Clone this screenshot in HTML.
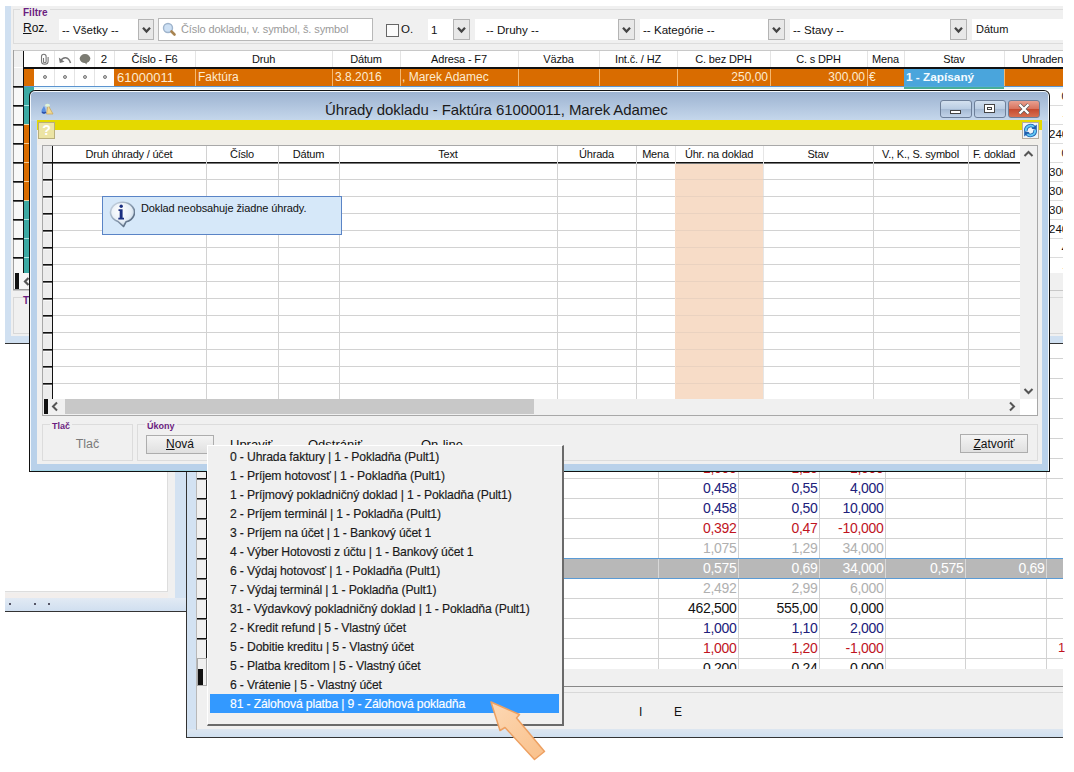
<!DOCTYPE html>
<html><head><meta charset="utf-8"><style>
html,body{margin:0;padding:0;}
body{width:1074px;height:772px;position:relative;overflow:hidden;background:#fff;font-family:"Liberation Sans",sans-serif;}
div{position:absolute;}
.t{white-space:nowrap;line-height:1.15;}
svg{display:block;}
</style></head><body>
<div style="left:186px;top:300px;width:877px;height:438px;background:#f0f0f0"></div>
<div style="left:186px;top:300px;width:1px;height:438px;background:#333"></div>
<div style="left:186px;top:737px;width:877px;height:1px;background:#333"></div>
<div style="left:187px;top:300px;width:10px;height:437px;background:#d3e2f2"></div>
<div style="left:187px;top:729px;width:876px;height:8px;background:linear-gradient(#dde6f0,#d0e0f0)"></div>
<div style="left:197px;top:300px;width:866px;height:369px;background:#fff"></div>
<div style="left:197px;top:300px;width:10px;height:369px;background:#f0f0f0"></div>
<div style="left:206px;top:300px;width:1px;height:386px;background:#111"></div>
<div style="left:196px;top:300px;width:1px;height:430px;background:#b8b8b8"></div>
<div style="left:197px;top:358px;width:10px;height:1px;background:#111"></div>
<div style="left:197px;top:359px;width:10px;height:1px;background:#777"></div>
<div style="left:207px;top:358px;width:856px;height:1px;background:#d2d2d2"></div>
<div style="left:197px;top:378px;width:10px;height:1px;background:#111"></div>
<div style="left:197px;top:379px;width:10px;height:1px;background:#777"></div>
<div style="left:207px;top:378px;width:856px;height:1px;background:#d2d2d2"></div>
<div style="left:197px;top:398px;width:10px;height:1px;background:#111"></div>
<div style="left:197px;top:399px;width:10px;height:1px;background:#777"></div>
<div style="left:207px;top:398px;width:856px;height:1px;background:#d2d2d2"></div>
<div style="left:197px;top:418px;width:10px;height:1px;background:#111"></div>
<div style="left:197px;top:419px;width:10px;height:1px;background:#777"></div>
<div style="left:207px;top:418px;width:856px;height:1px;background:#d2d2d2"></div>
<div style="left:197px;top:438px;width:10px;height:1px;background:#111"></div>
<div style="left:197px;top:439px;width:10px;height:1px;background:#777"></div>
<div style="left:207px;top:438px;width:856px;height:1px;background:#d2d2d2"></div>
<div style="left:197px;top:458px;width:10px;height:1px;background:#111"></div>
<div style="left:197px;top:459px;width:10px;height:1px;background:#777"></div>
<div style="left:207px;top:458px;width:856px;height:1px;background:#d2d2d2"></div>
<div style="left:197px;top:478px;width:10px;height:1px;background:#111"></div>
<div style="left:197px;top:479px;width:10px;height:1px;background:#777"></div>
<div style="left:207px;top:478px;width:856px;height:1px;background:#d2d2d2"></div>
<div style="left:197px;top:498px;width:10px;height:1px;background:#111"></div>
<div style="left:197px;top:499px;width:10px;height:1px;background:#777"></div>
<div style="left:207px;top:498px;width:856px;height:1px;background:#d2d2d2"></div>
<div style="left:197px;top:518px;width:10px;height:1px;background:#111"></div>
<div style="left:197px;top:519px;width:10px;height:1px;background:#777"></div>
<div style="left:207px;top:518px;width:856px;height:1px;background:#d2d2d2"></div>
<div style="left:197px;top:538px;width:10px;height:1px;background:#111"></div>
<div style="left:197px;top:539px;width:10px;height:1px;background:#777"></div>
<div style="left:207px;top:538px;width:856px;height:1px;background:#d2d2d2"></div>
<div style="left:197px;top:558px;width:10px;height:1px;background:#111"></div>
<div style="left:197px;top:559px;width:10px;height:1px;background:#777"></div>
<div style="left:207px;top:558px;width:856px;height:1px;background:#d2d2d2"></div>
<div style="left:197px;top:578px;width:10px;height:1px;background:#111"></div>
<div style="left:197px;top:579px;width:10px;height:1px;background:#777"></div>
<div style="left:207px;top:578px;width:856px;height:1px;background:#d2d2d2"></div>
<div style="left:197px;top:598px;width:10px;height:1px;background:#111"></div>
<div style="left:197px;top:599px;width:10px;height:1px;background:#777"></div>
<div style="left:207px;top:598px;width:856px;height:1px;background:#d2d2d2"></div>
<div style="left:197px;top:618px;width:10px;height:1px;background:#111"></div>
<div style="left:197px;top:619px;width:10px;height:1px;background:#777"></div>
<div style="left:207px;top:618px;width:856px;height:1px;background:#d2d2d2"></div>
<div style="left:197px;top:638px;width:10px;height:1px;background:#111"></div>
<div style="left:197px;top:639px;width:10px;height:1px;background:#777"></div>
<div style="left:207px;top:638px;width:856px;height:1px;background:#d2d2d2"></div>
<div style="left:197px;top:658px;width:10px;height:1px;background:#111"></div>
<div style="left:197px;top:659px;width:10px;height:1px;background:#777"></div>
<div style="left:207px;top:658px;width:856px;height:1px;background:#d2d2d2"></div>
<div style="left:197px;top:678px;width:10px;height:1px;background:#111"></div>
<div style="left:197px;top:679px;width:10px;height:1px;background:#777"></div>
<div style="left:658px;top:300px;width:1px;height:369px;background:#d2d2d2"></div>
<div style="left:738px;top:300px;width:1px;height:369px;background:#d2d2d2"></div>
<div style="left:819px;top:300px;width:1px;height:369px;background:#d2d2d2"></div>
<div style="left:885px;top:300px;width:1px;height:369px;background:#d2d2d2"></div>
<div style="left:965px;top:300px;width:1px;height:369px;background:#d2d2d2"></div>
<div style="left:1046px;top:300px;width:1px;height:369px;background:#d2d2d2"></div>
<div style="left:207px;top:559px;width:856px;height:20px;background:#b8b8b8"></div>
<div style="left:207px;top:558px;width:856px;height:1px;background:#5b9bd5"></div>
<div style="left:207px;top:578px;width:856px;height:1px;background:#5b9bd5"></div>
<div style="left:658px;top:559px;width:1px;height:19px;background:#d8d8d8"></div>
<div style="left:738px;top:559px;width:1px;height:19px;background:#d8d8d8"></div>
<div style="left:819px;top:559px;width:1px;height:19px;background:#d8d8d8"></div>
<div style="left:885px;top:559px;width:1px;height:19px;background:#d8d8d8"></div>
<div style="left:965px;top:559px;width:1px;height:19px;background:#d8d8d8"></div>
<div style="left:1046px;top:559px;width:1px;height:19px;background:#d8d8d8"></div>
<div class="t" style="left:658px;top:460px;width:78.5px;text-align:right;color:#c0141e;font-size:14px;letter-spacing:-0.3px">1,000</div>
<div class="t" style="left:738px;top:460px;width:79.5px;text-align:right;color:#c0141e;font-size:14px;letter-spacing:-0.3px">1,20</div>
<div class="t" style="left:819px;top:460px;width:64.5px;text-align:right;color:#c0141e;font-size:14px;letter-spacing:-0.3px">-1,000</div>
<div class="t" style="left:658px;top:480px;width:78.5px;text-align:right;color:#20207a;font-size:14px;letter-spacing:-0.3px">0,458</div>
<div class="t" style="left:738px;top:480px;width:79.5px;text-align:right;color:#20207a;font-size:14px;letter-spacing:-0.3px">0,55</div>
<div class="t" style="left:819px;top:480px;width:64.5px;text-align:right;color:#20207a;font-size:14px;letter-spacing:-0.3px">4,000</div>
<div class="t" style="left:658px;top:500px;width:78.5px;text-align:right;color:#20207a;font-size:14px;letter-spacing:-0.3px">0,458</div>
<div class="t" style="left:738px;top:500px;width:79.5px;text-align:right;color:#20207a;font-size:14px;letter-spacing:-0.3px">0,50</div>
<div class="t" style="left:819px;top:500px;width:64.5px;text-align:right;color:#20207a;font-size:14px;letter-spacing:-0.3px">10,000</div>
<div class="t" style="left:658px;top:520px;width:78.5px;text-align:right;color:#c0141e;font-size:14px;letter-spacing:-0.3px">0,392</div>
<div class="t" style="left:738px;top:520px;width:79.5px;text-align:right;color:#c0141e;font-size:14px;letter-spacing:-0.3px">0,47</div>
<div class="t" style="left:819px;top:520px;width:64.5px;text-align:right;color:#c0141e;font-size:14px;letter-spacing:-0.3px">-10,000</div>
<div class="t" style="left:658px;top:540px;width:78.5px;text-align:right;color:#b0b0b0;font-size:14px;letter-spacing:-0.3px">1,075</div>
<div class="t" style="left:738px;top:540px;width:79.5px;text-align:right;color:#b0b0b0;font-size:14px;letter-spacing:-0.3px">1,29</div>
<div class="t" style="left:819px;top:540px;width:64.5px;text-align:right;color:#b0b0b0;font-size:14px;letter-spacing:-0.3px">34,000</div>
<div class="t" style="left:658px;top:560px;width:78.5px;text-align:right;color:#fff;font-size:14px;letter-spacing:-0.3px">0,575</div>
<div class="t" style="left:738px;top:560px;width:79.5px;text-align:right;color:#fff;font-size:14px;letter-spacing:-0.3px">0,69</div>
<div class="t" style="left:819px;top:560px;width:64.5px;text-align:right;color:#fff;font-size:14px;letter-spacing:-0.3px">34,000</div>
<div class="t" style="left:885px;top:560px;width:78.5px;text-align:right;color:#fff;font-size:14px;letter-spacing:-0.3px">0,575</div>
<div class="t" style="left:965px;top:560px;width:79.5px;text-align:right;color:#fff;font-size:14px;letter-spacing:-0.3px">0,69</div>
<div class="t" style="left:658px;top:580px;width:78.5px;text-align:right;color:#b0b0b0;font-size:14px;letter-spacing:-0.3px">2,492</div>
<div class="t" style="left:738px;top:580px;width:79.5px;text-align:right;color:#b0b0b0;font-size:14px;letter-spacing:-0.3px">2,99</div>
<div class="t" style="left:819px;top:580px;width:64.5px;text-align:right;color:#b0b0b0;font-size:14px;letter-spacing:-0.3px">6,000</div>
<div class="t" style="left:658px;top:600px;width:78.5px;text-align:right;color:#111;font-size:14px;letter-spacing:-0.3px">462,500</div>
<div class="t" style="left:738px;top:600px;width:79.5px;text-align:right;color:#111;font-size:14px;letter-spacing:-0.3px">555,00</div>
<div class="t" style="left:819px;top:600px;width:64.5px;text-align:right;color:#111;font-size:14px;letter-spacing:-0.3px">0,000</div>
<div class="t" style="left:658px;top:620px;width:78.5px;text-align:right;color:#20207a;font-size:14px;letter-spacing:-0.3px">1,000</div>
<div class="t" style="left:738px;top:620px;width:79.5px;text-align:right;color:#20207a;font-size:14px;letter-spacing:-0.3px">1,10</div>
<div class="t" style="left:819px;top:620px;width:64.5px;text-align:right;color:#20207a;font-size:14px;letter-spacing:-0.3px">2,000</div>
<div class="t" style="left:658px;top:640px;width:78.5px;text-align:right;color:#c0141e;font-size:14px;letter-spacing:-0.3px">1,000</div>
<div class="t" style="left:738px;top:640px;width:79.5px;text-align:right;color:#c0141e;font-size:14px;letter-spacing:-0.3px">1,20</div>
<div class="t" style="left:819px;top:640px;width:64.5px;text-align:right;color:#c0141e;font-size:14px;letter-spacing:-0.3px">-1,000</div>
<div class="t" style="left:658px;top:660px;width:78.5px;text-align:right;color:#111;font-size:14px;letter-spacing:-0.3px">0,200</div>
<div class="t" style="left:738px;top:660px;width:79.5px;text-align:right;color:#111;font-size:14px;letter-spacing:-0.3px">0,24</div>
<div class="t" style="left:819px;top:660px;width:64.5px;text-align:right;color:#111;font-size:14px;letter-spacing:-0.3px">0,000</div>
<div class="t" style="left:1058px;top:641px;color:#c0141e;font-size:13px;">1</div>
<div style="left:197px;top:669px;width:866px;height:60px;background:#f0f0f0"></div>
<div style="left:197px;top:658px;width:10px;height:28px;background:#f0f0f0;border:1px solid #aaa;box-sizing:border-box"></div>
<div style="left:198px;top:669px;width:5px;height:16px;background:#111"></div>
<div style="left:207px;top:686px;width:856px;height:1px;background:#888"></div>
<div style="left:207px;top:692px;width:856px;height:1px;background:#d8d8d8"></div>
<div class="t" style="left:639px;top:706px;font-size:12px;color:#111">I</div>
<div class="t" style="left:674px;top:706px;font-size:12px;color:#111">E</div>
<div style="left:5px;top:300px;width:181px;height:311px;background:#fff"></div>
<div style="left:167px;top:300px;width:8px;height:298px;background:#f0f0f0"></div>
<div style="left:167px;top:300px;width:1px;height:291px;background:#ddd"></div>
<div style="left:5px;top:591px;width:170px;height:7px;background:#f0f0f0"></div>
<div style="left:5px;top:591px;width:163px;height:1px;background:#ddd"></div>
<div style="left:175px;top:300px;width:11px;height:310px;background:#d3e2f2"></div>
<div style="left:5px;top:598px;width:181px;height:13px;background:linear-gradient(#e2eaf4,#d0dff0)"></div>
<div style="left:5px;top:611px;width:182px;height:1px;background:#333"></div>
<div style="left:5px;top:593px;width:163px;height:5px;background:#f2eeec"></div>
<div style="left:9px;top:603px;width:2px;height:2px;background:#556"></div>
<div style="left:34px;top:603px;width:2px;height:2px;background:#556"></div>
<div style="left:48px;top:603px;width:2px;height:2px;background:#556"></div>
<div style="left:186px;top:300px;width:1px;height:311px;background:#333"></div>
<div style="left:5px;top:6px;width:1058px;height:338px;background:#f0f0f0"></div>
<div style="left:5px;top:6px;width:6px;height:337px;background:#d0e0f1"></div>
<div style="left:5px;top:336px;width:1058px;height:7px;background:#d0e0f1"></div>
<div style="left:5px;top:343px;width:1058px;height:1px;background:#333"></div>
<div style="left:13px;top:9px;width:1050px;height:35px;border:1px solid #dcdcdc;border-right:none;box-sizing:border-box"></div>
<div class="t" style="left:20px;top:7px;font-size:10px;font-weight:bold;color:#6b1d80;background:#f0f0f0;padding:0 3px">Filtre</div>
<div class="t" style="left:23px;top:22px;font-size:12px;color:#111"><u>R</u>oz.</div>
<div style="left:59px;top:19px;width:79px;height:21px;background:#fff"></div>
<div style="left:138px;top:19px;width:16px;height:21px;background:#e8e8e8;border:1px solid #b4b4b4;box-sizing:border-box"></div>
<svg style="position:absolute;left:142px;top:26px" width="9" height="8" viewBox="0 0 9 8"><path d="M1 1.8 L4.5 5.5 L8 1.8" stroke="#444" stroke-width="2.3" fill="none"/></svg>
<div class="t" style="left:62px;top:23px;font-size:11.6px;color:#111">-- Všetky --</div>
<div style="left:158px;top:18px;width:215px;height:23px;background:#fff;border:1px solid #b8b8b8;box-sizing:border-box"></div>
<svg style="position:absolute;left:162px;top:22px" width="15" height="15" viewBox="0 0 15 15"><circle cx="6" cy="6" r="4.5" fill="#cde0f4" stroke="#9fb4cc" stroke-width="1.4"/><path d="M9.5 9.5 L12.5 12.5" stroke="#a88450" stroke-width="2.6" stroke-linecap="round"/></svg>
<div class="t" style="left:181px;top:23px;font-size:11px;color:#9a9a9a;letter-spacing:-0.1px">Číslo dokladu, v. symbol, š. symbol</div>
<div style="left:386px;top:24px;width:13px;height:13px;background:#fbfbfb;border:1px solid #666;box-sizing:border-box"></div>
<div class="t" style="left:401px;top:23px;font-size:11.5px;color:#111">O.</div>
<div style="left:428px;top:19px;width:25px;height:21px;background:#fff"></div>
<div style="left:453px;top:19px;width:17px;height:21px;background:#e8e8e8;border:1px solid #b4b4b4;box-sizing:border-box"></div>
<svg style="position:absolute;left:457px;top:26px" width="9" height="8" viewBox="0 0 9 8"><path d="M1 1.8 L4.5 5.5 L8 1.8" stroke="#444" stroke-width="2.3" fill="none"/></svg>
<div class="t" style="left:431px;top:23px;font-size:11.6px;color:#111">1</div>
<div style="left:475px;top:19px;width:143px;height:21px;background:#fff"></div>
<div style="left:618px;top:19px;width:17px;height:21px;background:#e8e8e8;border:1px solid #b4b4b4;box-sizing:border-box"></div>
<svg style="position:absolute;left:622px;top:26px" width="9" height="8" viewBox="0 0 9 8"><path d="M1 1.8 L4.5 5.5 L8 1.8" stroke="#444" stroke-width="2.3" fill="none"/></svg>
<div class="t" style="left:486px;top:23px;font-size:11.6px;color:#111">-- Druhy --</div>
<div style="left:640px;top:19px;width:128px;height:21px;background:#fff"></div>
<div style="left:768px;top:19px;width:17px;height:21px;background:#e8e8e8;border:1px solid #b4b4b4;box-sizing:border-box"></div>
<svg style="position:absolute;left:772px;top:26px" width="9" height="8" viewBox="0 0 9 8"><path d="M1 1.8 L4.5 5.5 L8 1.8" stroke="#444" stroke-width="2.3" fill="none"/></svg>
<div class="t" style="left:643px;top:23px;font-size:11.6px;color:#111">-- Kategórie --</div>
<div style="left:790px;top:19px;width:160px;height:21px;background:#fff"></div>
<div style="left:950px;top:19px;width:17px;height:21px;background:#e8e8e8;border:1px solid #b4b4b4;box-sizing:border-box"></div>
<svg style="position:absolute;left:954px;top:26px" width="9" height="8" viewBox="0 0 9 8"><path d="M1 1.8 L4.5 5.5 L8 1.8" stroke="#444" stroke-width="2.3" fill="none"/></svg>
<div class="t" style="left:793px;top:23px;font-size:11.6px;color:#111">-- Stavy --</div>
<div style="left:972px;top:19px;width:91px;height:21px;background:#fff"></div>
<div class="t" style="left:976px;top:23px;font-size:11px;color:#111">Dátum</div>
<div style="left:13px;top:50px;width:1050px;height:223px;background:#fff"></div>
<div style="left:13px;top:50px;width:1050px;height:1px;background:#c8c8c8"></div>
<div style="left:13px;top:50px;width:1px;height:240px;background:#a0a0a0"></div>
<div style="left:14px;top:51px;width:9px;height:16px;background:#f0f0f0"></div>
<div style="left:23px;top:51px;width:1px;height:222px;background:#111"></div>
<div style="left:24px;top:67px;width:1039px;height:2px;background:#111"></div>
<div style="left:54px;top:51px;width:1px;height:16px;background:#e4e4e4"></div>
<div style="left:74px;top:51px;width:1px;height:16px;background:#e4e4e4"></div>
<div style="left:94px;top:51px;width:1px;height:16px;background:#e4e4e4"></div>
<div style="left:114px;top:51px;width:1px;height:16px;background:#e4e4e4"></div>
<div style="left:195px;top:51px;width:1px;height:16px;background:#e4e4e4"></div>
<div style="left:332px;top:51px;width:1px;height:16px;background:#e4e4e4"></div>
<div style="left:400px;top:51px;width:1px;height:16px;background:#e4e4e4"></div>
<div style="left:518px;top:51px;width:1px;height:16px;background:#e4e4e4"></div>
<div style="left:599px;top:51px;width:1px;height:16px;background:#e4e4e4"></div>
<div style="left:677px;top:51px;width:1px;height:16px;background:#e4e4e4"></div>
<div style="left:770px;top:51px;width:1px;height:16px;background:#e4e4e4"></div>
<div style="left:867px;top:51px;width:1px;height:16px;background:#e4e4e4"></div>
<div style="left:904px;top:51px;width:1px;height:16px;background:#e4e4e4"></div>
<div style="left:1004px;top:51px;width:1px;height:16px;background:#e4e4e4"></div>
<div class="t" style="left:114px;top:53px;width:81px;text-align:center;font-size:11px;letter-spacing:-0.15px;color:#111;overflow:hidden">Číslo - F6</div>
<div class="t" style="left:195px;top:53px;width:137px;text-align:center;font-size:11px;letter-spacing:-0.15px;color:#111;overflow:hidden">Druh</div>
<div class="t" style="left:332px;top:53px;width:68px;text-align:center;font-size:11px;letter-spacing:-0.15px;color:#111;overflow:hidden">Dátum</div>
<div class="t" style="left:400px;top:53px;width:118px;text-align:center;font-size:11px;letter-spacing:-0.15px;color:#111;overflow:hidden">Adresa - F7</div>
<div class="t" style="left:518px;top:53px;width:81px;text-align:center;font-size:11px;letter-spacing:-0.15px;color:#111;overflow:hidden">Väzba</div>
<div class="t" style="left:599px;top:53px;width:78px;text-align:center;font-size:11px;letter-spacing:-0.15px;color:#111;overflow:hidden">Int.č. / HZ</div>
<div class="t" style="left:677px;top:53px;width:93px;text-align:center;font-size:11px;letter-spacing:-0.15px;color:#111;overflow:hidden">C. bez DPH</div>
<div class="t" style="left:770px;top:53px;width:97px;text-align:center;font-size:11px;letter-spacing:-0.15px;color:#111;overflow:hidden">C. s DPH</div>
<div class="t" style="left:867px;top:53px;width:37px;text-align:center;font-size:11px;letter-spacing:-0.15px;color:#111;overflow:hidden">Mena</div>
<div class="t" style="left:904px;top:53px;width:100px;text-align:center;font-size:11px;letter-spacing:-0.15px;color:#111;overflow:hidden">Stav</div>
<div class="t" style="left:1004px;top:53px;width:59px;text-align:center;font-size:11px;letter-spacing:-0.15px;color:#111;overflow:hidden;text-align:left;padding-left:18px;box-sizing:border-box">Uhraden</div>
<div class="t" style="left:94px;top:53px;width:20px;text-align:center;font-size:11.5px;color:#111">2</div>
<svg style="position:absolute;left:40px;top:53px" width="11" height="12" viewBox="0 0 11 12"><path d="M3.5 5 V8.5 a1.3 1.3 0 0 0 2.6 0 V3.5 a2.3 2.3 0 0 0 -4.6 0 V8 a3.3 3.3 0 0 0 6.6 0 V4" stroke="#777" stroke-width="1.1" fill="none"/></svg>
<svg style="position:absolute;left:58px;top:55px" width="14" height="9" viewBox="0 0 14 9"><path d="M2.5 6 C5 1.5 10.5 1 12.5 8" stroke="#777" stroke-width="1.5" fill="none"/><path d="M0.8 2.5 L1.8 8 L6.5 6.8 Z" fill="#777"/></svg>
<svg style="position:absolute;left:79px;top:54px" width="12" height="11" viewBox="0 0 12 11"><ellipse cx="6" cy="4.6" rx="5.3" ry="4.5" fill="#7b7b72"/><path d="M5 8 L7.5 10.5 L8 7.5 Z" fill="#7b7b72"/></svg>
<div style="left:14px;top:68px;width:9px;height:18px;background:#f0f0f0"></div>
<div style="left:24px;top:69px;width:10px;height:17px;background:#d96c00"></div>
<div style="left:34px;top:69px;width:80px;height:17px;background:#fff"></div>
<div style="left:54px;top:69px;width:1px;height:17px;background:#e4e4e4"></div>
<div style="left:74px;top:69px;width:1px;height:17px;background:#e4e4e4"></div>
<div style="left:94px;top:69px;width:1px;height:17px;background:#e4e4e4"></div>
<div style="left:43px;top:75px;width:4px;height:4px;background:#c8c8c8;border:1px solid #7a7a7a;border-radius:50%;box-sizing:border-box"></div>
<div style="left:63px;top:75px;width:4px;height:4px;background:#c8c8c8;border:1px solid #7a7a7a;border-radius:50%;box-sizing:border-box"></div>
<div style="left:83px;top:75px;width:4px;height:4px;background:#c8c8c8;border:1px solid #7a7a7a;border-radius:50%;box-sizing:border-box"></div>
<div style="left:103px;top:75px;width:4px;height:4px;background:#c8c8c8;border:1px solid #7a7a7a;border-radius:50%;box-sizing:border-box"></div>
<div style="left:114px;top:69px;width:949px;height:17px;background:#d96c00"></div>
<div style="left:195px;top:69px;width:1px;height:17px;background:#f5b870"></div>
<div style="left:332px;top:69px;width:1px;height:17px;background:#f5b870"></div>
<div style="left:400px;top:69px;width:1px;height:17px;background:#f5b870"></div>
<div style="left:518px;top:69px;width:1px;height:17px;background:#f5b870"></div>
<div style="left:599px;top:69px;width:1px;height:17px;background:#f5b870"></div>
<div style="left:677px;top:69px;width:1px;height:17px;background:#f5b870"></div>
<div style="left:770px;top:69px;width:1px;height:17px;background:#f5b870"></div>
<div style="left:867px;top:69px;width:1px;height:17px;background:#f5b870"></div>
<div style="left:904px;top:69px;width:1px;height:17px;background:#f5b870"></div>
<div style="left:1004px;top:69px;width:1px;height:17px;background:#f5b870"></div>
<div style="left:904px;top:69px;width:100px;height:17px;background:#4aa5dc"></div>
<div class="t" style="left:117px;top:71px;font-size:13px;color:#fdebd0">61000011</div>
<div class="t" style="left:198px;top:71px;font-size:12px;color:#fdebd0">Faktúra</div>
<div class="t" style="left:335px;top:71px;font-size:12px;color:#fdebd0">3.8.2016</div>
<div class="t" style="left:402px;top:71px;font-size:12px;color:#fdebd0">, Marek Adamec</div>
<div class="t" style="left:677px;top:71px;width:91px;text-align:right;font-size:12px;color:#fdebd0">250,00</div>
<div class="t" style="left:770px;top:71px;width:95px;text-align:right;font-size:12px;color:#fdebd0">300,00</div>
<div class="t" style="left:869px;top:71px;font-size:12px;color:#fdebd0">€</div>
<div class="t" style="left:906px;top:71px;font-size:11.8px;font-weight:bold;color:#f4fbff">1 - Zapísaný</div>
<div style="left:24px;top:86px;width:1039px;height:1px;background:#5c94d0"></div>
<div style="left:34px;top:87px;width:1029px;height:2px;background:#e8f6fc"></div>
<div style="left:904px;top:86px;width:100px;height:1px;background:#52aadc"></div>
<div style="left:904px;top:87px;width:100px;height:2px;background:#48ae98"></div>
<div style="left:24px;top:87px;width:10px;height:19px;background:#3ca9a3"></div>
<div style="left:14px;top:87px;width:9px;height:18px;background:#f8f8f8"></div>
<div style="left:13px;top:86px;width:10px;height:1px;background:#111"></div>
<div style="left:13px;top:87px;width:10px;height:1px;background:#555"></div>
<div style="left:24px;top:106px;width:10px;height:19px;background:#3ca9a3"></div>
<div style="left:14px;top:106px;width:9px;height:18px;background:#f8f8f8"></div>
<div style="left:13px;top:105px;width:10px;height:1px;background:#111"></div>
<div style="left:13px;top:106px;width:10px;height:1px;background:#555"></div>
<div style="left:24px;top:125px;width:10px;height:19px;background:#d96c00"></div>
<div style="left:14px;top:125px;width:9px;height:18px;background:#f8f8f8"></div>
<div style="left:13px;top:124px;width:10px;height:1px;background:#111"></div>
<div style="left:13px;top:125px;width:10px;height:1px;background:#555"></div>
<div style="left:24px;top:144px;width:10px;height:19px;background:#d96c00"></div>
<div style="left:14px;top:144px;width:9px;height:18px;background:#f8f8f8"></div>
<div style="left:13px;top:143px;width:10px;height:1px;background:#111"></div>
<div style="left:13px;top:144px;width:10px;height:1px;background:#555"></div>
<div style="left:24px;top:163px;width:10px;height:19px;background:#d96c00"></div>
<div style="left:14px;top:163px;width:9px;height:18px;background:#f8f8f8"></div>
<div style="left:13px;top:162px;width:10px;height:1px;background:#111"></div>
<div style="left:13px;top:163px;width:10px;height:1px;background:#555"></div>
<div style="left:24px;top:182px;width:10px;height:19px;background:#d96c00"></div>
<div style="left:14px;top:182px;width:9px;height:18px;background:#f8f8f8"></div>
<div style="left:13px;top:181px;width:10px;height:1px;background:#111"></div>
<div style="left:13px;top:182px;width:10px;height:1px;background:#555"></div>
<div style="left:24px;top:201px;width:10px;height:19px;background:#3ca9a3"></div>
<div style="left:14px;top:201px;width:9px;height:18px;background:#f8f8f8"></div>
<div style="left:13px;top:200px;width:10px;height:1px;background:#111"></div>
<div style="left:13px;top:201px;width:10px;height:1px;background:#555"></div>
<div style="left:24px;top:220px;width:10px;height:19px;background:#3ca9a3"></div>
<div style="left:14px;top:220px;width:9px;height:18px;background:#f8f8f8"></div>
<div style="left:13px;top:219px;width:10px;height:1px;background:#111"></div>
<div style="left:13px;top:220px;width:10px;height:1px;background:#555"></div>
<div style="left:24px;top:239px;width:10px;height:19px;background:#3ca9a3"></div>
<div style="left:14px;top:239px;width:9px;height:18px;background:#f8f8f8"></div>
<div style="left:13px;top:238px;width:10px;height:1px;background:#111"></div>
<div style="left:13px;top:239px;width:10px;height:1px;background:#555"></div>
<div style="left:24px;top:258px;width:10px;height:16px;background:#3ca9a3"></div>
<div style="left:14px;top:258px;width:9px;height:18px;background:#f8f8f8"></div>
<div style="left:13px;top:257px;width:10px;height:1px;background:#111"></div>
<div style="left:13px;top:258px;width:10px;height:1px;background:#555"></div>
<div style="left:24px;top:105px;width:5px;height:1px;background:#a8e6e2"></div>
<div style="left:24px;top:124px;width:5px;height:1px;background:#f2d8a8"></div>
<div style="left:24px;top:143px;width:5px;height:1px;background:#f6c890"></div>
<div style="left:24px;top:162px;width:5px;height:1px;background:#f6c890"></div>
<div style="left:24px;top:181px;width:5px;height:1px;background:#f6c890"></div>
<div style="left:24px;top:200px;width:5px;height:1px;background:#f2d8a8"></div>
<div style="left:24px;top:219px;width:5px;height:1px;background:#a8e6e2"></div>
<div style="left:24px;top:238px;width:5px;height:1px;background:#a8e6e2"></div>
<div style="left:24px;top:257px;width:5px;height:1px;background:#a8e6e2"></div>
<div style="left:1049px;top:105px;width:14px;height:1px;background:#dcdcdc"></div>
<div style="left:1049px;top:124px;width:14px;height:1px;background:#dcdcdc"></div>
<div style="left:1049px;top:143px;width:14px;height:1px;background:#dcdcdc"></div>
<div style="left:1049px;top:162px;width:14px;height:1px;background:#dcdcdc"></div>
<div style="left:1049px;top:181px;width:14px;height:1px;background:#dcdcdc"></div>
<div style="left:1049px;top:200px;width:14px;height:1px;background:#dcdcdc"></div>
<div style="left:1049px;top:219px;width:14px;height:1px;background:#dcdcdc"></div>
<div style="left:1049px;top:238px;width:14px;height:1px;background:#dcdcdc"></div>
<div style="left:1049px;top:257px;width:14px;height:1px;background:#dcdcdc"></div>
<div style="left:1049px;top:86px;width:14px;height:187px;overflow:hidden">
<div class="t" style="left:12.5px;top:4px;font-size:11.5px;color:#111">0,00</div>
<div class="t" style="left:13.5px;top:23px;font-size:11.5px;color:#111">-</div>
<div class="t" style="left:0px;top:42px;font-size:11.5px;color:#111">240,00</div>
<div class="t" style="left:12.5px;top:61px;font-size:11.5px;color:#111">0,00</div>
<div class="t" style="left:0px;top:80px;font-size:11.5px;color:#111">300,00</div>
<div class="t" style="left:0px;top:99px;font-size:11.5px;color:#111">300,00</div>
<div class="t" style="left:0px;top:118px;font-size:11.5px;color:#111">300,00</div>
<div class="t" style="left:0px;top:137px;font-size:11.5px;color:#111">240,00</div>
<div class="t" style="left:12.5px;top:156px;font-size:11.5px;color:#111">4,00</div>
<div class="t" style="left:13.5px;top:175px;font-size:11.5px;color:#111">-</div>
</div>
<div style="left:13px;top:273px;width:1050px;height:17px;background:#f0f0f0"></div>
<div style="left:13px;top:290px;width:1050px;height:1px;background:#c8c8c8"></div>
<div style="left:15px;top:273px;width:4px;height:16px;background:#111"></div>
<div style="left:13px;top:273px;width:16px;height:17px;background:#f6f6f6;border-left:1px solid #999;border-bottom:1px solid #999;box-sizing:border-box"></div>
<div style="left:15px;top:273px;width:4px;height:16px;background:#111"></div>
<svg style="position:absolute;left:23px;top:277px" width="7" height="9" viewBox="0 0 7 9"><path d="M5.5 1 L2 4.5 L5.5 8" stroke="#555" stroke-width="2.2" fill="none"/></svg>
<div style="left:13px;top:297px;width:1050px;height:37px;border:1px solid #d8d8d8;border-right:none;box-sizing:border-box"></div>
<div class="t" style="left:23px;top:295px;font-size:10px;font-weight:bold;color:#6b1d80">T</div>
<div style="left:29px;top:90px;width:1021px;height:382px;background:#111;border-radius:6px 6px 0 0"></div>
<div style="left:30px;top:91px;width:1019px;height:380px;background:#f4f8fc;border-radius:5px 5px 0 0"></div>
<div style="left:31px;top:92px;width:1017px;height:379px;background:#b9d1ea;border-radius:4px 4px 0 0"></div>
<div style="left:31px;top:92px;width:1017px;height:29px;background:linear-gradient(#9db3d1,#c6d8ec);border-radius:4px 4px 0 0"></div>
<div style="left:37px;top:120px;width:1005px;height:344px;background:#f0f0f0"></div>
<div style="left:31px;top:470px;width:1017px;height:1px;background:#9fd4e4"></div>
<div style="left:37px;top:120px;width:1005px;height:10px;background:#e4d900"></div>
<div style="left:37px;top:130px;width:1005px;height:15px;background:#f1efea"></div>
<div style="left:38px;top:122px;width:17px;height:17px;background:#ece4a4;border:1px solid #b8ae7c;box-sizing:border-box"></div>
<div class="t" style="left:38px;top:122px;width:17px;text-align:center;font-size:14px;font-weight:bold;color:#fff">?</div>
<svg style="position:absolute;left:39px;top:102px" width="16" height="14" viewBox="0 0 16 14"><path d="M9 3 L14 12 L7.5 12 Z" fill="#f2d98e" stroke="#caa860" stroke-width="0.8"/><path d="M5 4 Q2 8 2.5 10 Q4 12.5 6.5 11 Q7.5 8 5 4 Z" fill="#5b8fe0"/><path d="M3 10 Q5 12 7 10" stroke="#2a4fa8" stroke-width="1.4" fill="none"/><ellipse cx="8.5" cy="3.2" rx="2.5" ry="1.5" fill="#e0f4d8"/></svg>
<div class="t" style="left:325px;top:101px;font-size:15px;color:#1a1a1a;letter-spacing:-0.1px">Úhrady dokladu - Faktúra 61000011, Marek Adamec</div>
<div style="left:940px;top:100px;width:32px;height:18px;border:1px solid #6d7f99;border-radius:3px;box-sizing:border-box;background:linear-gradient(#d3e0ef 0%,#b9cce3 50%,#a4b9d3 51%,#c2d3e8 100%)"></div>
<div style="left:950px;top:110px;width:11px;height:4px;background:#fff;border:1px solid #444;box-sizing:border-box"></div>
<div style="left:974px;top:100px;width:32px;height:18px;border:1px solid #6d7f99;border-radius:3px;box-sizing:border-box;background:linear-gradient(#d3e0ef 0%,#b9cce3 50%,#a4b9d3 51%,#c2d3e8 100%)"></div>
<div style="left:984px;top:104px;width:11px;height:9px;background:#fff;border:1px solid #444;box-sizing:border-box"></div><div style="left:987px;top:107px;width:5px;height:3px;background:#fff;border:1px solid #444;box-sizing:border-box"></div>
<div style="left:1008px;top:100px;width:32px;height:18px;border:1px solid #6d7f99;border-radius:3px;box-sizing:border-box;background:linear-gradient(#e8a090 0%,#d8725c 50%,#c4492e 51%,#d87050 100%)"></div>
<svg style="position:absolute;left:1017px;top:103px" width="14" height="12" viewBox="0 0 14 12"><path d="M2.5 1.5 L11.5 10.5 M11.5 1.5 L2.5 10.5" stroke="#555" stroke-width="3.6"/><path d="M2.5 1.5 L11.5 10.5 M11.5 1.5 L2.5 10.5" stroke="#fff" stroke-width="2.4"/></svg>
<div style="left:1022px;top:122px;width:17px;height:17px;background:#eef4f8;border:1px solid #b4aca0;box-sizing:border-box"></div>
<svg style="position:absolute;left:1023px;top:123px" width="15" height="15" viewBox="0 0 15 15"><g fill="none" stroke-linecap="butt"><path d="M3 8 A4.6 4.6 0 0 1 11 4.2" stroke="#1d5fae" stroke-width="3.6"/><path d="M12 7 A4.6 4.6 0 0 1 4 10.8" stroke="#1d5fae" stroke-width="3.6"/><path d="M3 8 A4.6 4.6 0 0 1 11 4.2" stroke="#62c8f4" stroke-width="2"/><path d="M12 7 A4.6 4.6 0 0 1 4 10.8" stroke="#62c8f4" stroke-width="2"/></g><path d="M13.8 1.5 L13.8 7 L8.5 5.8 Z" fill="#1d5fae"/><path d="M1.2 13.5 L1.2 8 L6.5 9.2 Z" fill="#1d5fae"/></svg>
<div style="left:42px;top:145px;width:996px;height:271px;background:#fff;border:1px solid #a8a8a8;box-sizing:border-box"></div>
<div style="left:43px;top:146px;width:9px;height:253px;background:#ececec"></div>
<div style="left:52px;top:146px;width:1px;height:253px;background:#111"></div>
<div style="left:53px;top:162px;width:967px;height:1px;background:#111"></div>
<div style="left:53px;top:163px;width:967px;height:1px;background:#777"></div>
<div style="left:206px;top:146px;width:1px;height:253px;background:#d2d2d2"></div>
<div style="left:278px;top:146px;width:1px;height:253px;background:#d2d2d2"></div>
<div style="left:339px;top:146px;width:1px;height:253px;background:#d2d2d2"></div>
<div style="left:557px;top:146px;width:1px;height:253px;background:#d2d2d2"></div>
<div style="left:636px;top:146px;width:1px;height:253px;background:#d2d2d2"></div>
<div style="left:675px;top:146px;width:1px;height:253px;background:#e6e6e6"></div>
<div style="left:763px;top:146px;width:1px;height:253px;background:#e6e6e6"></div>
<div style="left:873px;top:146px;width:1px;height:253px;background:#d2d2d2"></div>
<div style="left:968px;top:146px;width:1px;height:253px;background:#d2d2d2"></div>
<div style="left:675px;top:164px;width:88px;height:235px;background:#f7dcc7"></div>
<div style="left:43px;top:162px;width:9px;height:1px;background:#111"></div>
<div style="left:43px;top:163px;width:9px;height:1px;background:#666"></div>
<div style="left:44px;top:164px;width:7px;height:1px;background:#fafafa"></div>
<div style="left:43px;top:179px;width:9px;height:1px;background:#111"></div>
<div style="left:43px;top:180px;width:9px;height:1px;background:#666"></div>
<div style="left:44px;top:181px;width:7px;height:1px;background:#fafafa"></div>
<div style="left:53px;top:179px;width:622px;height:1px;background:#d2d2d2"></div>
<div style="left:763px;top:179px;width:257px;height:1px;background:#d2d2d2"></div>
<div style="left:676px;top:179px;width:87px;height:1px;background:#ead2c0"></div>
<div style="left:43px;top:196px;width:9px;height:1px;background:#111"></div>
<div style="left:43px;top:197px;width:9px;height:1px;background:#666"></div>
<div style="left:44px;top:198px;width:7px;height:1px;background:#fafafa"></div>
<div style="left:53px;top:196px;width:622px;height:1px;background:#d2d2d2"></div>
<div style="left:763px;top:196px;width:257px;height:1px;background:#d2d2d2"></div>
<div style="left:676px;top:196px;width:87px;height:1px;background:#ead2c0"></div>
<div style="left:43px;top:213px;width:9px;height:1px;background:#111"></div>
<div style="left:43px;top:214px;width:9px;height:1px;background:#666"></div>
<div style="left:44px;top:215px;width:7px;height:1px;background:#fafafa"></div>
<div style="left:53px;top:213px;width:622px;height:1px;background:#d2d2d2"></div>
<div style="left:763px;top:213px;width:257px;height:1px;background:#d2d2d2"></div>
<div style="left:676px;top:213px;width:87px;height:1px;background:#ead2c0"></div>
<div style="left:43px;top:230px;width:9px;height:1px;background:#111"></div>
<div style="left:43px;top:231px;width:9px;height:1px;background:#666"></div>
<div style="left:44px;top:232px;width:7px;height:1px;background:#fafafa"></div>
<div style="left:53px;top:230px;width:622px;height:1px;background:#d2d2d2"></div>
<div style="left:763px;top:230px;width:257px;height:1px;background:#d2d2d2"></div>
<div style="left:676px;top:230px;width:87px;height:1px;background:#ead2c0"></div>
<div style="left:43px;top:247px;width:9px;height:1px;background:#111"></div>
<div style="left:43px;top:248px;width:9px;height:1px;background:#666"></div>
<div style="left:44px;top:249px;width:7px;height:1px;background:#fafafa"></div>
<div style="left:53px;top:247px;width:622px;height:1px;background:#d2d2d2"></div>
<div style="left:763px;top:247px;width:257px;height:1px;background:#d2d2d2"></div>
<div style="left:676px;top:247px;width:87px;height:1px;background:#ead2c0"></div>
<div style="left:43px;top:264px;width:9px;height:1px;background:#111"></div>
<div style="left:43px;top:265px;width:9px;height:1px;background:#666"></div>
<div style="left:44px;top:266px;width:7px;height:1px;background:#fafafa"></div>
<div style="left:53px;top:264px;width:622px;height:1px;background:#d2d2d2"></div>
<div style="left:763px;top:264px;width:257px;height:1px;background:#d2d2d2"></div>
<div style="left:676px;top:264px;width:87px;height:1px;background:#ead2c0"></div>
<div style="left:43px;top:281px;width:9px;height:1px;background:#111"></div>
<div style="left:43px;top:282px;width:9px;height:1px;background:#666"></div>
<div style="left:44px;top:283px;width:7px;height:1px;background:#fafafa"></div>
<div style="left:53px;top:281px;width:622px;height:1px;background:#d2d2d2"></div>
<div style="left:763px;top:281px;width:257px;height:1px;background:#d2d2d2"></div>
<div style="left:676px;top:281px;width:87px;height:1px;background:#ead2c0"></div>
<div style="left:43px;top:298px;width:9px;height:1px;background:#111"></div>
<div style="left:43px;top:299px;width:9px;height:1px;background:#666"></div>
<div style="left:44px;top:300px;width:7px;height:1px;background:#fafafa"></div>
<div style="left:53px;top:298px;width:622px;height:1px;background:#d2d2d2"></div>
<div style="left:763px;top:298px;width:257px;height:1px;background:#d2d2d2"></div>
<div style="left:676px;top:298px;width:87px;height:1px;background:#ead2c0"></div>
<div style="left:43px;top:315px;width:9px;height:1px;background:#111"></div>
<div style="left:43px;top:316px;width:9px;height:1px;background:#666"></div>
<div style="left:44px;top:317px;width:7px;height:1px;background:#fafafa"></div>
<div style="left:53px;top:315px;width:622px;height:1px;background:#d2d2d2"></div>
<div style="left:763px;top:315px;width:257px;height:1px;background:#d2d2d2"></div>
<div style="left:676px;top:315px;width:87px;height:1px;background:#ead2c0"></div>
<div style="left:43px;top:332px;width:9px;height:1px;background:#111"></div>
<div style="left:43px;top:333px;width:9px;height:1px;background:#666"></div>
<div style="left:44px;top:334px;width:7px;height:1px;background:#fafafa"></div>
<div style="left:53px;top:332px;width:622px;height:1px;background:#d2d2d2"></div>
<div style="left:763px;top:332px;width:257px;height:1px;background:#d2d2d2"></div>
<div style="left:676px;top:332px;width:87px;height:1px;background:#ead2c0"></div>
<div style="left:43px;top:349px;width:9px;height:1px;background:#111"></div>
<div style="left:43px;top:350px;width:9px;height:1px;background:#666"></div>
<div style="left:44px;top:351px;width:7px;height:1px;background:#fafafa"></div>
<div style="left:53px;top:349px;width:622px;height:1px;background:#d2d2d2"></div>
<div style="left:763px;top:349px;width:257px;height:1px;background:#d2d2d2"></div>
<div style="left:676px;top:349px;width:87px;height:1px;background:#ead2c0"></div>
<div style="left:43px;top:366px;width:9px;height:1px;background:#111"></div>
<div style="left:43px;top:367px;width:9px;height:1px;background:#666"></div>
<div style="left:44px;top:368px;width:7px;height:1px;background:#fafafa"></div>
<div style="left:53px;top:366px;width:622px;height:1px;background:#d2d2d2"></div>
<div style="left:763px;top:366px;width:257px;height:1px;background:#d2d2d2"></div>
<div style="left:676px;top:366px;width:87px;height:1px;background:#ead2c0"></div>
<div style="left:43px;top:383px;width:9px;height:1px;background:#111"></div>
<div style="left:43px;top:384px;width:9px;height:1px;background:#666"></div>
<div style="left:44px;top:385px;width:7px;height:1px;background:#fafafa"></div>
<div style="left:53px;top:383px;width:622px;height:1px;background:#d2d2d2"></div>
<div style="left:763px;top:383px;width:257px;height:1px;background:#d2d2d2"></div>
<div style="left:676px;top:383px;width:87px;height:1px;background:#ead2c0"></div>
<div class="t" style="left:52px;top:148px;width:154px;text-align:center;font-size:11px;letter-spacing:-0.2px;color:#111;white-space:nowrap">Druh úhrady / účet</div>
<div class="t" style="left:206px;top:148px;width:72px;text-align:center;font-size:11px;letter-spacing:-0.2px;color:#111;white-space:nowrap">Číslo</div>
<div class="t" style="left:278px;top:148px;width:61px;text-align:center;font-size:11px;letter-spacing:-0.2px;color:#111;white-space:nowrap">Dátum</div>
<div class="t" style="left:339px;top:148px;width:218px;text-align:center;font-size:11px;letter-spacing:-0.2px;color:#111;white-space:nowrap">Text</div>
<div class="t" style="left:557px;top:148px;width:79px;text-align:center;font-size:11px;letter-spacing:-0.2px;color:#111;white-space:nowrap">Úhrada</div>
<div class="t" style="left:636px;top:148px;width:39px;text-align:center;font-size:11px;letter-spacing:-0.2px;color:#111;white-space:nowrap">Mena</div>
<div class="t" style="left:675px;top:148px;width:88px;text-align:center;font-size:11px;letter-spacing:-0.2px;color:#111;white-space:nowrap">Úhr. na doklad</div>
<div class="t" style="left:763px;top:148px;width:110px;text-align:center;font-size:11px;letter-spacing:-0.2px;color:#111;white-space:nowrap">Stav</div>
<div class="t" style="left:873px;top:148px;width:95px;text-align:center;font-size:11px;letter-spacing:-0.2px;color:#111;white-space:nowrap">V., K., S. symbol</div>
<div class="t" style="left:968px;top:148px;width:52px;text-align:center;font-size:11px;letter-spacing:-0.2px;color:#111;white-space:nowrap">F. doklad</div>
<div style="left:1020px;top:146px;width:17px;height:253px;background:#f0f0f0"></div>
<svg style="position:absolute;left:1023px;top:150px" width="11" height="8" viewBox="0 0 11 8"><path d="M1.5 6 L5.5 2 L9.5 6" stroke="#555" stroke-width="2" fill="none"/></svg>
<svg style="position:absolute;left:1023px;top:387px" width="11" height="8" viewBox="0 0 11 8"><path d="M1.5 2 L5.5 6 L9.5 2" stroke="#555" stroke-width="2" fill="none"/></svg>
<div style="left:43px;top:399px;width:977px;height:16px;background:#f0f0f0"></div>
<div style="left:44px;top:399px;width:4px;height:15px;background:#111"></div>
<div style="left:65px;top:399px;width:469px;height:15px;background:#c8c8c8"></div>
<svg style="position:absolute;left:51px;top:401px" width="8" height="11" viewBox="0 0 8 11"><path d="M6 1.5 L2 5.5 L6 9.5" stroke="#555" stroke-width="2" fill="none"/></svg>
<svg style="position:absolute;left:1008px;top:401px" width="8" height="11" viewBox="0 0 8 11"><path d="M2 1.5 L6 5.5 L2 9.5" stroke="#555" stroke-width="2" fill="none"/></svg>
<div style="left:1020px;top:399px;width:17px;height:16px;background:#fff"></div>
<div style="left:102px;top:196px;width:240px;height:39px;background:#d6e8f9;border:1px solid #5a84c6;box-sizing:border-box"></div>
<svg style="position:absolute;left:107px;top:201px" width="28" height="28" viewBox="0 0 28 28"><defs><radialGradient id="ig" cx="40%" cy="35%" r="70%"><stop offset="0" stop-color="#ffffff"/><stop offset="0.65" stop-color="#e6eef6"/><stop offset="1" stop-color="#b8c8d8"/></radialGradient><linearGradient id="is" x1="0" y1="0" x2="1" y2="1"><stop offset="0" stop-color="#d0dce8"/><stop offset="0.5" stop-color="#8a9cb0"/><stop offset="1" stop-color="#3e5068"/></linearGradient></defs><path d="M11 20.5 A12 10 0 1 1 19 20.8 L16.5 25.5 Z" fill="url(#ig)" stroke="url(#is)" stroke-width="1.6" stroke-linejoin="round"/><circle cx="14.2" cy="5.2" r="1.7" fill="#1b2f80"/><path d="M11.5 8.3 H15.6 V16.8 H17 V18.6 H11.3 V16.8 H12.7 V10 H11.5 Z" fill="#1b2f80"/></svg>
<div class="t" style="left:141px;top:202px;font-size:11px;color:#111;letter-spacing:-0.1px">Doklad neobsahuje žiadne úhrady.</div>
<div style="left:42px;top:424px;width:91px;height:37px;border:1px solid #dcdcdc;box-sizing:border-box"></div>
<div class="t" style="left:50px;top:421px;font-size:9px;font-weight:bold;color:#6b1d80;background:#f0f0f0;padding:0 2px">Tlač</div>
<div class="t" style="left:42px;top:437px;width:91px;text-align:center;font-size:12.5px;color:#7a7a7a">Tlač</div>
<div style="left:137px;top:424px;width:901px;height:37px;border:1px solid #dcdcdc;box-sizing:border-box"></div>
<div class="t" style="left:145px;top:421px;font-size:9px;font-weight:bold;color:#6b1d80;background:#f0f0f0;padding:0 2px">Úkony</div>
<div style="left:146px;top:435px;width:68px;height:19px;background:linear-gradient(#f4f4f4,#e0e0e0);border:1px solid #adadad;box-sizing:border-box"></div>
<div class="t" style="left:146px;top:438px;width:68px;text-align:center;font-size:12px;color:#111"><u>N</u>ová</div>
<div class="t" style="left:230px;top:438px;font-size:13px;color:#111">Upraviť</div>
<div class="t" style="left:308px;top:438px;font-size:13px;color:#111">Odstrániť</div>
<div class="t" style="left:421px;top:438px;font-size:13px;color:#111">On-line</div>
<div style="left:960px;top:434px;width:68px;height:19px;background:linear-gradient(#f4f4f4,#e0e0e0);border:1px solid #adadad;box-sizing:border-box"></div>
<div class="t" style="left:960px;top:438px;width:68px;text-align:center;font-size:12px;color:#111"><u>Z</u>atvoriť</div>
<div style="left:207px;top:445px;width:357px;height:281px;background:#f0f0f0;border-left:1px solid #fff;border-top:1px solid #fff;border-right:2px solid #6a6a6a;border-bottom:2px solid #6a6a6a;box-sizing:border-box"></div>
<div style="left:210px;top:694px;width:349px;height:19px;background:#3399ff"></div>
<div class="t" style="left:230px;top:450px;font-size:12.2px;color:#1a1a1a;letter-spacing:-0.15px;-webkit-text-stroke:0.15px #1a1a1a">0 - Uhrada faktury | 1 - Pokladňa (Pult1)</div>
<div class="t" style="left:230px;top:469px;font-size:12.2px;color:#1a1a1a;letter-spacing:-0.15px;-webkit-text-stroke:0.15px #1a1a1a">1 - Príjem hotovosť | 1 - Pokladňa (Pult1)</div>
<div class="t" style="left:230px;top:488px;font-size:12.2px;color:#1a1a1a;letter-spacing:-0.15px;-webkit-text-stroke:0.15px #1a1a1a">1 - Príjmový pokladničný doklad | 1 - Pokladňa (Pult1)</div>
<div class="t" style="left:230px;top:507px;font-size:12.2px;color:#1a1a1a;letter-spacing:-0.15px;-webkit-text-stroke:0.15px #1a1a1a">2 - Príjem terminál | 1 - Pokladňa (Pult1)</div>
<div class="t" style="left:230px;top:526px;font-size:12.2px;color:#1a1a1a;letter-spacing:-0.15px;-webkit-text-stroke:0.15px #1a1a1a">3 - Príjem na účet | 1 - Bankový účet 1</div>
<div class="t" style="left:230px;top:545px;font-size:12.2px;color:#1a1a1a;letter-spacing:-0.15px;-webkit-text-stroke:0.15px #1a1a1a">4 - Výber Hotovosti z účtu | 1 - Bankový účet 1</div>
<div class="t" style="left:230px;top:564px;font-size:12.2px;color:#1a1a1a;letter-spacing:-0.15px;-webkit-text-stroke:0.15px #1a1a1a">6 - Výdaj hotovosť | 1 - Pokladňa (Pult1)</div>
<div class="t" style="left:230px;top:583px;font-size:12.2px;color:#1a1a1a;letter-spacing:-0.15px;-webkit-text-stroke:0.15px #1a1a1a">7 - Výdaj terminál | 1 - Pokladňa (Pult1)</div>
<div class="t" style="left:230px;top:602px;font-size:12.2px;color:#1a1a1a;letter-spacing:-0.15px;-webkit-text-stroke:0.15px #1a1a1a">31 - Výdavkový pokladničný doklad | 1 - Pokladňa (Pult1)</div>
<div class="t" style="left:230px;top:621px;font-size:12.2px;color:#1a1a1a;letter-spacing:-0.15px;-webkit-text-stroke:0.15px #1a1a1a">2 - Kredit refund | 5 - Vlastný účet</div>
<div class="t" style="left:230px;top:640px;font-size:12.2px;color:#1a1a1a;letter-spacing:-0.15px;-webkit-text-stroke:0.15px #1a1a1a">5 - Dobitie kreditu | 5 - Vlastný účet</div>
<div class="t" style="left:230px;top:659px;font-size:12.2px;color:#1a1a1a;letter-spacing:-0.15px;-webkit-text-stroke:0.15px #1a1a1a">5 - Platba kreditom | 5 - Vlastný účet</div>
<div class="t" style="left:230px;top:678px;font-size:12.2px;color:#1a1a1a;letter-spacing:-0.15px;-webkit-text-stroke:0.15px #1a1a1a">6 - Vrátenie | 5 - Vlastný účet</div>
<div class="t" style="left:230px;top:697px;font-size:12.2px;color:#fff;letter-spacing:-0.15px;-webkit-text-stroke:0.15px #fff">81 - Zálohová platba | 9 - Zálohová pokladňa</div>
<svg style="position:absolute;left:480px;top:692px" width="80" height="76" viewBox="480 692 80 76"><defs><linearGradient id="ag" x1="0" y1="0" x2="1" y2="1"><stop offset="0" stop-color="#fdd8b4"/><stop offset="1" stop-color="#f9c08a"/></linearGradient></defs><path d="M491 702 L519.5 714.5 L516.5 718 L544.5 751.5 L534.5 759.5 L505 727.5 L500 730.5 Z" fill="url(#ag)" stroke="#eda062" stroke-width="1.5" stroke-linejoin="round"/></svg>
</body></html>
